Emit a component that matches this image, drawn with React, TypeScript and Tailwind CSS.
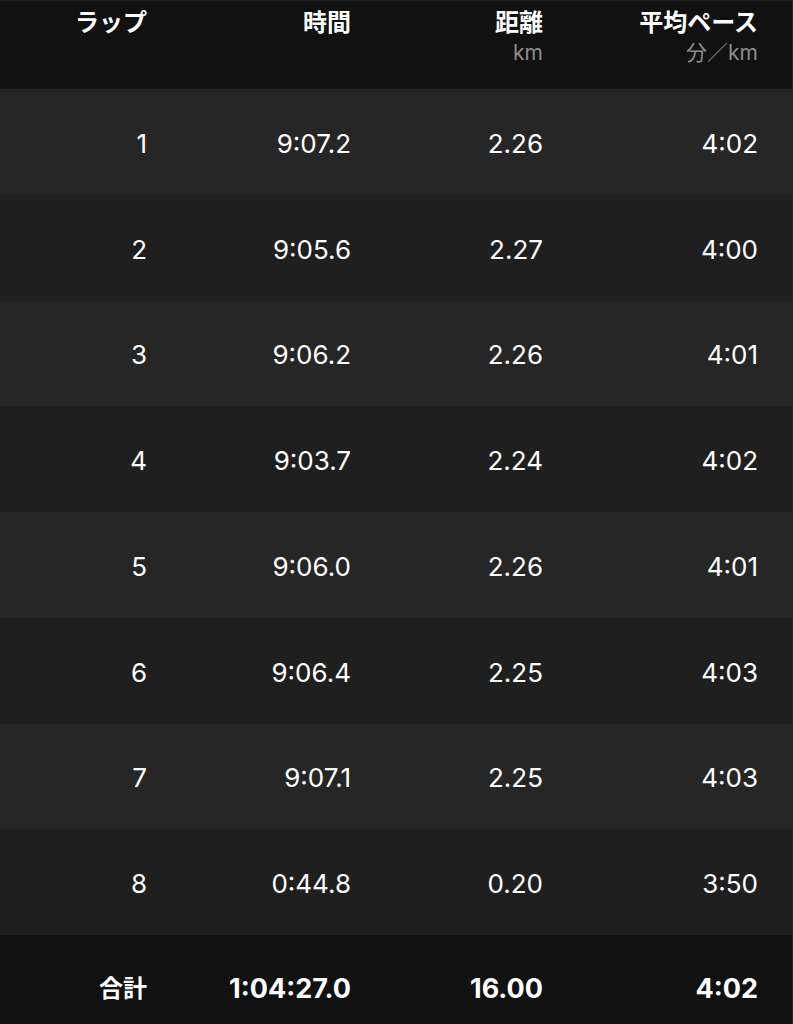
import React from "react";

const laps = [
  { n: "1", time: "9:07.2", dist: "2.26", pace: "4:02" },
  { n: "2", time: "9:05.6", dist: "2.27", pace: "4:00" },
  { n: "3", time: "9:06.2", dist: "2.26", pace: "4:01" },
  { n: "4", time: "9:03.7", dist: "2.24", pace: "4:02" },
  { n: "5", time: "9:06.0", dist: "2.26", pace: "4:01" },
  { n: "6", time: "9:06.4", dist: "2.25", pace: "4:03" },
  { n: "7", time: "9:07.1", dist: "2.25", pace: "4:03" },
  { n: "8", time: "0:44.8", dist: "0.20", pace: "3:50" },
];

const font = {
  fontFamily: "Inter, 'Noto Sans CJK JP', sans-serif",
};

export default function App() {
  return (
    <div
      className="w-[793px] bg-[#111111] text-white border-r border-[#262626]"
      style={font}
    >
      {/* header */}
      <div className="h-[89px] flex pt-[8px] pr-[34px] border-t border-[#1c1c1c]">
        <div className="w-[147px] text-right text-[24px] leading-[28px] font-bold">
          ラップ
        </div>
        <div className="w-[204px] text-right text-[24px] leading-[28px] font-bold">
          時間
        </div>
        <div className="w-[192px] text-right">
          <div className="text-[24px] leading-[28px] font-bold">距離</div>
          <div className="text-[21px] leading-[32px] text-[#8e8e8e]">km</div>
        </div>
        <div className="w-[215px] text-right">
          <div className="text-[24px] leading-[28px] font-bold">平均ペース</div>
          <div className="text-[21px] leading-[32px] text-[#8e8e8e]">分／km</div>
        </div>
      </div>

      {laps.map((lap, i) => (
        <div
          key={lap.n}
          className={`h-[105.75px] flex items-center pt-[3px] pr-[34px] text-[26px] ${
            i % 2 === 0 ? "bg-[#262626]" : "bg-[#1f1f1f]"
          }`}
        >
          <div className="w-[147px] text-right">{lap.n}</div>
          <div className="w-[204px] text-right">{lap.time}</div>
          <div className="w-[192px] text-right">{lap.dist}</div>
          <div className="w-[215px] text-right">{lap.pace}</div>
        </div>
      ))}

      {/* totals */}
      <div className="h-[105.75px] flex items-center pt-[3px] pr-[34px] font-bold text-[27px]">
        <div className="w-[147px] text-right text-[24px]">合計</div>
        <div className="w-[204px] text-right">1:04:27.0</div>
        <div className="w-[192px] text-right">16.00</div>
        <div className="w-[215px] text-right">4:02</div>
      </div>
    </div>
  );
}
